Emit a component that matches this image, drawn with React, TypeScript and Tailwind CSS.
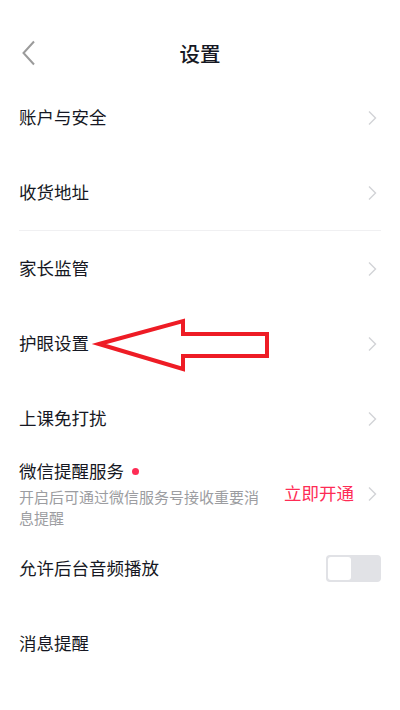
import { useState } from "react";

const FONT = { fontFamily: '"Noto Sans CJK SC", "Noto Sans", sans-serif' };

function Chevron() {
  return (
    <svg width="12" height="16" viewBox="0 0 12 16" className="shrink-0 mr-[2px]">
      <path d="M2 1.5 L8.5 8 L2 14.5" fill="none" stroke="#d2d3d6" strokeWidth="1.4" />
    </svg>
  );
}

function Row({ label, arrow = true }: { label: string; arrow?: boolean }) {
  return (
    <div className="h-[75px] flex items-center justify-between">
      <span className="text-[17.5px] text-[#161823]">{label}</span>
      {arrow && <Chevron />}
    </div>
  );
}

export default function App() {
  const [bgAudio, setBgAudio] = useState(false);

  return (
    <div className="relative w-[400px] h-[710px] bg-white overflow-hidden" style={FONT}>
      {/* Header */}
      <div className="pt-[26px]">
        <div className="relative h-[54px] flex items-center justify-center">
          <svg width="16" height="26" viewBox="0 0 16 26" className="absolute left-[21px] top-[14px]">
            <path d="M13 1.5 L2.5 13 L13 24.5" fill="none" stroke="#9b9b9b" strokeWidth="2" />
          </svg>
          <h1 className="text-[20.5px] font-medium text-[#161823]">设置</h1>
        </div>
      </div>

      {/* List */}
      <div className="px-[19px]">
        <Row label="账户与安全" />
        <Row label="收货地址" />
        <div className="h-px bg-[#f0f0f2]" />
        <Row label="家长监管" />
        <Row label="护眼设置" />
        <Row label="上课免打扰" />

        <div className="h-[75px] flex items-center justify-between">
          <div className="flex flex-col gap-[2px]">
            <div className="flex items-center h-[24px]">
              <span className="text-[17.5px] text-[#161823]">微信提醒服务</span>
              <span className="ml-[8px] w-[7px] h-[7px] rounded-full bg-[#fe2c55]" />
            </div>
            <p className="w-[245px] text-[15px] leading-[21px] text-[#9c9da1]">
              开启后可通过微信服务号接收重要消息提醒
            </p>
          </div>
          <div className="flex items-center gap-[13px]">
            <span className="text-[17.5px] text-[#fe2c55]">立即开通</span>
            <Chevron />
          </div>
        </div>

        <div className="h-[75px] flex items-center justify-between">
          <span className="text-[17.5px] text-[#161823]">允许后台音频播放</span>
          <button
            onClick={() => setBgAudio(!bgAudio)}
            className={`w-[55px] h-[27px] rounded-[4px] p-[2px] flex ${
              bgAudio ? "bg-[#fe2c55] justify-end" : "bg-[#e1e2e6] justify-start"
            }`}
          >
            <span className="w-[23px] h-[23px] rounded-[3px] bg-white" />
          </button>
        </div>

        <Row label="消息提醒" arrow={false} />
      </div>

      {/* Red annotation arrow */}
      <svg width="400" height="710" className="absolute left-0 top-0 pointer-events-none">
        <polygon
          points="99,344 183,321 183,334 267,334 267,356 183,356 183,369"
          fill="none"
          stroke="#ee1c25"
          strokeWidth="4"
          strokeLinejoin="miter"
        />
      </svg>
    </div>
  );
}
